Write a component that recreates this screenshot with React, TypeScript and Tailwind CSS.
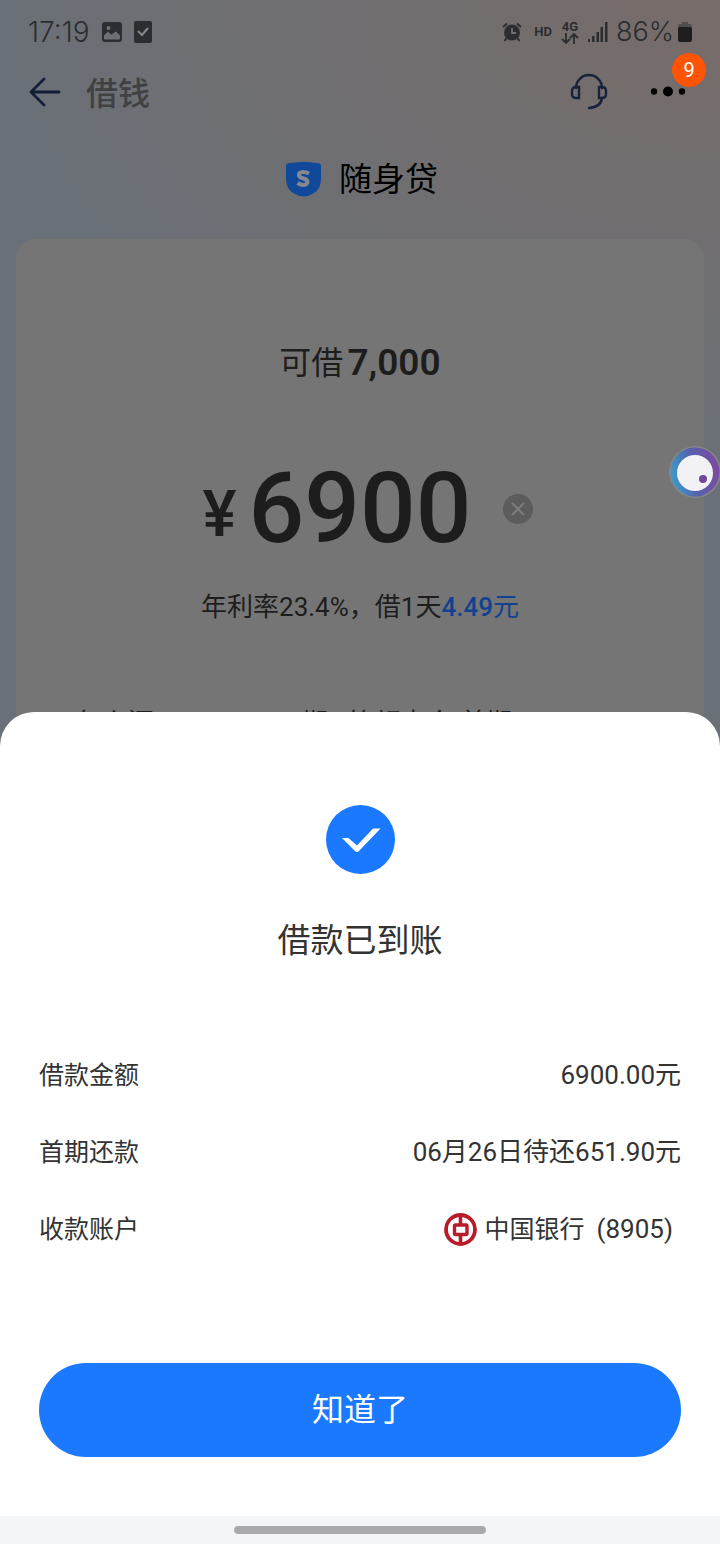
import type { ReactNode } from "react"

function StatusBar() {
  return (
    <div className="flex h-16 items-center justify-between px-7 text-[#2c2d30]">
      <div className="flex items-center gap-3">
        <span className="font-[Inter] text-[28px] font-light">17:19</span>
        <svg width="20" height="20" viewBox="0 0 20 20">
          <rect width="20" height="20" rx="3" fill="currentColor" />
          <path d="M2 16.500v-3l4-4 3 3 2-1 3-2 4 4v3q0 1-1 1H3q-1 0-1-1z" fill="#6d7175" />
          <circle cx="6.500" cy="6" r="2" fill="#6d7175" />
        </svg>
        <svg width="18" height="22" viewBox="0 0 18 22">
          <rect width="18" height="22" rx="2" fill="currentColor" />
          <path d="M4 10l4 4 6-7" fill="none" stroke="#85888b" strokeWidth="2" />
        </svg>
      </div>
      <div className="flex items-center gap-2">
        <svg width="20" height="20" viewBox="0 0 20 20">
          <circle cx="10" cy="10.500" r="8" fill="currentColor" />
          <path d="M1 5l4-3.500M19 5l-4-3.500M4.500 16L2.500 19M15.500 16l2 3" stroke="currentColor" strokeWidth="2" />
          <path d="M10 6v5h4" fill="none" stroke="#736f6e" strokeWidth="1.800" />
        </svg>
        <span className="ml-1 font-[Roboto] text-[13px] font-bold">HD</span>
        <div className="flex w-5 flex-col items-center">
          <span className="font-[Roboto] text-[13px] leading-3 font-bold">4G</span>
          <svg width="18" height="11" viewBox="0 0 18 11" fill="none" stroke="currentColor" strokeWidth="1.800">
            <path d="M5 0v10M1 6l4 4 4-4M13 11V1M9 5l4-4 4 4" />
          </svg>
        </div>
        <svg width="20" height="20" viewBox="0 0 20 20" fill="currentColor">
          <path d="M0 17h2v3H0zM4 14h2.500v6H4zM8.500 10H11v10H8.500zM12.500 5H15v15h-2.500zM17 0h2.500v20H17z" />
        </svg>
        <span className="font-[Inter] text-[27px] font-light">86%</span>
        <svg className="-ml-1" width="14" height="20" viewBox="0 0 14 20">
          <path d="M4 0h6v2h2q2 0 2 2v3H0V4q0-2 2-2h2z" fill="#514e4e" />
          <rect y="5" width="14" height="15" rx="2" fill="#1e1e1f" />
        </svg>
      </div>
    </div>
  )
}

function NavBar() {
  return (
    <header className="flex h-14 items-center pl-7 pr-8">
      <button aria-label="返回" className="text-[#141d38]">
        <svg width="34" height="30" viewBox="0 0 34 30" fill="none" stroke="currentColor" strokeWidth="2.800" strokeLinecap="round" strokeLinejoin="round">
          <path d="M31 15H3M16 2L3 15l13 13" />
        </svg>
      </button>
      <h1 className="ml-6 flex-1 pt-1 text-[32px] font-medium text-[#404143]">借钱</h1>
      <button aria-label="客服" className="text-[#17223b]">
        <svg width="38" height="38" viewBox="0 0 38 38" fill="none" stroke="currentColor" strokeWidth="2.400" strokeLinecap="round">
          <path d="M6 15a13 13 0 0 1 26 0M32 25q-1 9-13 10" />
          <path d="M9 14H6q-4 0-4 4v3q0 4 4 4h3zM29 14h3q4 0 4 4v3q0 4-4 4h-3z" />
        </svg>
      </button>
      <button aria-label="更多" className="relative ml-10">
        <svg width="40" height="38" viewBox="0 0 40 38">
          <circle cx="6" cy="18.500" r="3.200" />
          <circle cx="20" cy="18.500" r="5" />
          <circle cx="34" cy="18.500" r="3.200" />
        </svg>
        <span className="absolute -top-5 left-6 flex size-[34px] items-center justify-center rounded-full bg-[#ff5404] font-[Roboto] text-xl text-white">9</span>
      </button>
    </header>
  )
}

function Row({ label, children }: { label: string; children: ReactNode }) {
  return (
    <div className="flex h-[77px] items-center justify-between">
      <dt className="text-[25px]">{label}</dt>
      <dd className="flex items-center">{children}</dd>
    </div>
  )
}

function LoanCard() {
  return (
    <section className="mx-4 min-h-screen rounded-[20px] bg-[#757575] pt-24 text-[#1d1d1d]">
      <p className="flex h-14 items-center justify-center gap-1 text-[32px]">
        可借<span className="text-[37px] font-semibold">7,000</span>
      </p>
      <div className="mt-[62px] flex h-28 items-center justify-center pl-4">
        <span className="mt-3 mr-3 text-[64px] font-medium">¥</span>
        <span className="text-[98px] leading-none font-medium">6900</span>
        <button aria-label="清除" className="ml-8 flex size-[30px] items-center justify-center rounded-full bg-[#5c5c5c]">
          <svg width="14" height="14" viewBox="0 0 14 14" stroke="#7d7d7d" strokeWidth="2">
            <path d="M1 1l12 12M13 1L1 13" />
          </svg>
        </button>
      </div>
      <p className="mt-5 flex h-11 items-center justify-center text-[26px]">
        年利率23.4%，借1天<span className="font-medium text-[#10428f]">4.49</span><span className="text-[#10428f]">元</span>
      </p>
      <div className="mt-[74px] flex h-10 items-center px-[60px] text-[26px]">
        <span>怎么还</span>
        <span className="ml-[119px]">12期</span>
        <span className="ml-5">等额本金</span>
        <span className="ml-2">首期</span>
      </div>
    </section>
  )
}

function FloatingBall() {
  return (
    <button aria-label="悬浮球" className="fixed top-[446px] -right-px z-20">
      <svg width="52" height="52" viewBox="0 0 52 52">
        <defs>
          <linearGradient id="ring" x1="0" y1="0.700" x2="1" y2="0.500">
            <stop offset="0" stopColor="#3a9fc9" />
            <stop offset="0.500" stopColor="#5660ad" />
            <stop offset="1" stopColor="#7d4aa0" />
          </linearGradient>
        </defs>
        <circle cx="26" cy="26" r="26" fill="#858585" />
        <circle cx="26" cy="26" r="24.500" fill="url(#ring)" />
        <circle cx="26" cy="27" r="18" fill="#f2f2f5" />
        <circle cx="34" cy="33" r="4" fill="#70479b" />
      </svg>
    </button>
  )
}

function SuccessSheet() {
  return (
    <div role="dialog" aria-labelledby="sheet-title" className="fixed inset-x-0 bottom-0 z-10 overflow-hidden rounded-t-[34px] bg-white text-[#333]">
      <div className="flex flex-col px-[39px] pt-[93px] pb-[59px]">
        <svg className="self-center" width="69" height="69" viewBox="0 0 69 69">
          <circle cx="34.500" cy="34.500" r="34.500" fill="#1a79ff" />
          <path d="M16 33h6.500L31 40.500 47 23.500h7.500L32.500 46.500q-1.500 1-3 0z" fill="#fff" />
        </svg>
        <h2 id="sheet-title" className="mt-[42px] text-center text-[33px] leading-[50px]">借款已到账</h2>
        <dl className="mt-[71px] text-[26px]">
          <Row label="借款金额">6900.00元</Row>
          <Row label="首期还款">06月26日待还651.90元</Row>
          <Row label="收款账户">
            <svg className="mr-2" width="33" height="33" viewBox="0 0 33 33" fill="none" stroke="#b81c2b">
              <circle cx="16.500" cy="16.500" r="14.500" strokeWidth="3.800" />
              <rect x="10.500" y="12" width="12.500" height="9.500" rx="1" strokeWidth="3.400" />
              <path d="M16.500 3v8M16.500 22v8" strokeWidth="3.600" />
            </svg>
            <span className="text-[25px]">中国银行</span>
            <span className="mr-2 ml-3">(8905)</span>
          </Row>
        </dl>
        <button className="mt-[95px] h-[94px] rounded-full bg-[#1a79ff] text-[32px] text-white">知道了</button>
      </div>
      <div className="flex h-7 items-center justify-center bg-[#f4f5f7]">
        <span className="h-2 w-[252px] rounded-full bg-[#a9a9ab]" />
      </div>
    </div>
  )
}

export default function App() {
  return (
    <div className="h-screen overflow-hidden bg-[#6a7077] bg-[radial-gradient(ellipse_100%_30%_at_top_right,#776c69,transparent)] font-[Roboto,'Noto_Sans_CJK_SC',sans-serif]">
      <StatusBar />
      <NavBar />
      <div className="flex h-[119px] items-center justify-center gap-[18px] pl-1 text-[33px] text-black">
        <svg width="35" height="35" viewBox="0 0 35 35">
          <path d="M0 4Q0 1 4 1 18-1 31 1q4 0 4 3v13q0 11-9 15-8 5-17 0-9-4-9-15z" fill="#10489a" />
          <path d="M23 11.500q-4-2-7-1.500-3.500.500-3 3.500.500 2 4.500 3t4 3.500q-.500 3-4 3-3 0-6-2" fill="none" stroke="#85898f" strokeWidth="4" />
        </svg>
        <span>随身贷</span>
      </div>
      <LoanCard />
      <FloatingBall />
      <SuccessSheet />
    </div>
  )
}
